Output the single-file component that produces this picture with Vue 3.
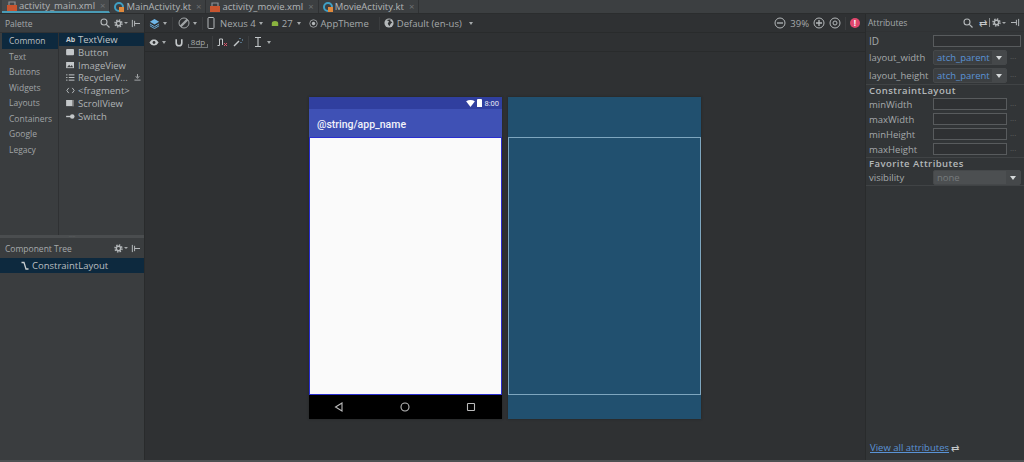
<script setup>
const tabs = [
  { name: "activity_main.xml", type: "xml", active: true },
  { name: "MainActivity.kt", type: "kt" },
  { name: "activity_movie.xml", type: "xml" },
  { name: "MovieActivity.kt", type: "kt" },
];
const categories = ["Common", "Text", "Buttons", "Widgets", "Layouts", "Containers", "Google", "Legacy"];
const widgets = [
  { name: "TextView", icon: "ab" },
  { name: "Button", icon: "button" },
  { name: "ImageView", icon: "image" },
  { name: "RecyclerV...", icon: "list", download: true },
  { name: "<fragment>", icon: "code" },
  { name: "ScrollView", icon: "scroll" },
  { name: "Switch", icon: "switch" },
];
const sizeAttrs = ["minWidth", "maxWidth", "minHeight", "maxHeight"];
</script>

<template>
  <div class="ide">
    <div class="tabs">
      <div v-for="t in tabs" :key="t.name" class="tab" :class="{ active: t.active }">
        <svg v-if="t.type === 'xml'" class="tab-icon" viewBox="0 0 10 10">
          <rect x="0" y="4" width="10" height="6" fill="#c8552f" />
          <path d="M2 4V1h6v3" fill="none" stroke="#8d9296" stroke-width="1.2" />
        </svg>
        <svg v-else class="tab-icon" viewBox="0 0 10 10">
          <circle cx="5" cy="5" r="4" fill="none" stroke="#3f9fc4" stroke-width="2" />
          <rect x="5" y="5" width="5" height="5" fill="#e08a3c" />
        </svg>
        <span>{{ t.name }}</span>
        <span class="close">×</span>
      </div>
    </div>

    <div class="main">
      <aside class="left">
        <div class="palette">
          <div class="panel-head">
            <span>Palette</span>
            <span class="head-icons">
              <svg viewBox="0 0 10 10" class="ico"><circle cx="4" cy="4" r="3" fill="none" stroke="#b4b8ba" stroke-width="1.1" /><path d="M6.3 6.3 9.5 9.5" stroke="#b4b8ba" stroke-width="1.2" /></svg>
              <svg viewBox="0 0 10 10" class="ico gear"><circle cx="5" cy="5" r="2.4" fill="none" stroke="#b4b8ba" stroke-width="1.6" /><circle cx="5" cy="5" r="3.9" fill="none" stroke="#b4b8ba" stroke-width="1.6" stroke-dasharray="1.6 1.46" /></svg>
              <span class="caret small"></span>
              <svg viewBox="0 0 10 10" class="ico pin"><path d="M1.5 1v8M4 5h6M4 2v6" stroke="#b4b8ba" stroke-width="1.1" fill="none" /></svg>
            </span>
          </div>
          <div class="palette-body">
            <ul class="cats">
              <li v-for="(c, i) in categories" :key="c" :class="{ sel: i === 0 }">{{ c }}</li>
            </ul>
            <ul class="widgets">
              <li v-for="(w, i) in widgets" :key="w.name" :class="{ sel: i === 0 }">
                <span class="w-icon">
                  <b v-if="w.icon === 'ab'">Ab</b>
                  <svg v-else-if="w.icon === 'button'" viewBox="0 0 10 8"><rect width="9" height="7" rx="1" fill="#c4c8ca" /></svg>
                  <svg v-else-if="w.icon === 'image'" viewBox="0 0 10 8"><rect width="9" height="7" fill="#c4c8ca" /><path d="M1 6 3.5 3 5 5 6.5 3.5 8 6z" fill="#3c3f41" /></svg>
                  <svg v-else-if="w.icon === 'list'" viewBox="0 0 10 8"><path d="M0 1h1.5M3 1h6.5M0 4h1.5M3 4h6.5M0 7h1.5M3 7h6.5" stroke="#c4c8ca" stroke-width="1.1" /></svg>
                  <svg v-else-if="w.icon === 'code'" viewBox="0 0 10 8"><path d="M3 1 .8 4 3 7M7 1l2.2 3L7 7" stroke="#c4c8ca" stroke-width="1" fill="none" /></svg>
                  <svg v-else-if="w.icon === 'scroll'" viewBox="0 0 10 8"><rect width="9" height="7" fill="#c4c8ca" /><rect x="7" width="2" height="7" fill="#777" /></svg>
                  <svg v-else viewBox="0 0 10 8"><path d="M0 4h5" stroke="#c4c8ca" stroke-width="1.6" /><circle cx="7" cy="4" r="2.6" fill="#c4c8ca" /></svg>
                </span>
                <span>{{ w.name }}</span>
                <svg v-if="w.download" class="dl" viewBox="0 0 8 8"><path d="M4 0v4M2 2.5 4 5l2-2.5M.5 7h7" stroke="#a5a9ab" stroke-width="1.1" fill="none" /></svg>
              </li>
            </ul>
          </div>
        </div>
        <div class="grip">·····</div>
        <div class="tree">
          <div class="panel-head tree-head">
            <span>Component Tree</span>
            <span class="head-icons">
              <svg viewBox="0 0 10 10" class="ico gear"><circle cx="5" cy="5" r="2.4" fill="none" stroke="#b4b8ba" stroke-width="1.6" /><circle cx="5" cy="5" r="3.9" fill="none" stroke="#b4b8ba" stroke-width="1.6" stroke-dasharray="1.6 1.46" /></svg>
              <span class="caret small"></span>
              <svg viewBox="0 0 10 10" class="ico pin"><path d="M1.5 1v8M4 5h6M4 2v6" stroke="#b4b8ba" stroke-width="1.1" fill="none" /></svg>
            </span>
          </div>
          <div class="tree-row">
            <svg viewBox="0 0 10 10" class="ico"><path d="M1.5 1.5h2.5l2 6.5h2.5" stroke="#c9ced0" stroke-width="1.3" fill="none" /></svg>
            <span>ConstraintLayout</span>
          </div>
        </div>
      </aside>

      <section class="center">
        <div class="bar bar-top">
          <svg viewBox="0 0 12 12" class="ico layers"><path d="M6 1 11 4 6 7 1 4z" fill="#6fb7e8" /><path d="M1 6.5 6 9.5l5-3M1 8.5l5 3 5-3" stroke="#6fb7e8" fill="none" /></svg>
          <span class="caret"></span>
          <i class="sep first-sep"></i>
          <svg viewBox="0 0 12 12" class="ico big"><circle cx="6" cy="6" r="5" fill="none" stroke="#a0a4a6" /><path d="M2.5 9.5l7-7" stroke="#a0a4a6" stroke-width="2.4" /></svg>
          <span class="caret"></span>
          <i class="sep second-sep"></i>
          <svg viewBox="0 0 8 12" class="device"><rect x="1" y=".5" width="6" height="11" rx="1" fill="none" stroke="#b4b8ba" /></svg>
          <span class="bar-text">Nexus 4</span>
          <span class="caret"></span>
          <svg viewBox="0 0 10 8" class="droid"><path d="M1 7V3.5C1 2 3 1 5 1s4 1 4 2.5V7z" fill="#8ab33f" /></svg>
          <span class="bar-text">27</span>
          <span class="caret after-api"></span>
          <svg viewBox="0 0 12 12" class="theme"><circle cx="6" cy="6" r="5" fill="none" stroke="#b4b8ba" /><circle cx="6" cy="6" r="2.2" fill="#b4b8ba" /></svg>
          <span class="bar-text">AppTheme</span>
          <i class="sep after-theme"></i>
          <svg viewBox="0 0 12 12" class="theme globe"><circle cx="6" cy="6" r="5.5" fill="#b4b8ba" /><path d="M3 2.5 6 4 4.5 7 6.5 10 8 7 10 5 7.5 3.5 8 1.5z" fill="#2f3133" /></svg>
          <span class="bar-text">Default (en-us)</span>
          <span class="caret after-locale"></span>
          <span class="bar-right">
            <svg viewBox="0 0 12 12" class="ico big"><circle cx="6" cy="6" r="5" fill="none" stroke="#b4b8ba" /><path d="M3 6h6" stroke="#b4b8ba" stroke-width="1.3" /></svg>
            <span class="bar-text">39%</span>
            <svg viewBox="0 0 12 12" class="ico big"><circle cx="6" cy="6" r="5" fill="none" stroke="#b4b8ba" /><path d="M3 6h6M6 3v6" stroke="#b4b8ba" stroke-width="1.3" /></svg>
            <svg viewBox="0 0 12 12" class="ico big"><circle cx="6" cy="6" r="5" fill="none" stroke="#b4b8ba" /><circle cx="6" cy="6" r="2" fill="none" stroke="#b4b8ba" /></svg>
            <i class="sep"></i>
            <span class="err">!</span>
          </span>
        </div>
        <div class="bar bar-second">
          <svg viewBox="0 0 12 8" class="eye"><path d="M.5 4C2.5 1 4 .5 6 .5S9.5 1 11.5 4C9.5 7 8 7.5 6 7.5S2.5 7 .5 4z" fill="#c4c8ca" /><circle cx="6" cy="4" r="1.7" fill="#2f3133" /></svg>
          <span class="caret"></span>
          <svg viewBox="0 0 10 10" class="magnet"><path d="M1.5 1v4.500a3.500 3.500 0 0 0 7 0V1" fill="none" stroke="#c4c8ca" stroke-width="2" /></svg>
          <span class="dp">8dp</span>
          <i class="sep"></i>
          <svg viewBox="0 0 10 10" class="ico"><path d="M.5 8.5h2V2h3v6" fill="none" stroke="#c4c8ca" /><path d="M7 6l3 3M10 6 7 9" stroke="#e0556a" /></svg>
          <svg viewBox="0 0 10 10" class="ico wand"><path d="M1 9 6 4" stroke="#c4c8ca" stroke-width="1.5" /><path d="M7 1v1M9 3h1M8 5v1" stroke="#7eb4dc" /></svg>
          <i class="sep after-wand"></i>
          <svg viewBox="0 0 8 10" class="beam"><path d="M1 .5h6M1 9.5h6M4 .5v9" stroke="#c4c8ca" stroke-width="1.1" /></svg>
          <span class="caret after-beam"></span>
        </div>
        <div class="canvas">
          <div class="phone">
            <div class="status">
              <svg viewBox="0 0 10 8" class="wifi"><path d="M0 1.5C3 -.5 7 -.5 10 1.5L5 8z" fill="#fff" /></svg>
              <span class="battery"></span>
              <span>8:00</span>
            </div>
            <div class="appbar">@string/app_name</div>
            <div class="screen"></div>
            <div class="nav">
              <svg viewBox="0 0 10 10"><path d="M8 1 1.5 5 8 9z" fill="none" stroke="#bbb" stroke-width="1.1" /></svg>
              <svg viewBox="0 0 10 10"><circle cx="5" cy="5" r="4" fill="none" stroke="#bbb" stroke-width="1.1" /></svg>
              <svg viewBox="0 0 10 10"><rect x="1.5" y="1.5" width="7" height="7" rx=".6" fill="none" stroke="#bbb" stroke-width="1.1" /></svg>
            </div>
          </div>
          <div class="blueprint">
            <div class="outline"></div>
          </div>
        </div>
      </section>

      <aside class="right">
        <div class="panel-head attr-head">
          <span>Attributes</span>
          <span class="head-icons">
            <svg viewBox="0 0 10 10" class="ico"><circle cx="4" cy="4" r="3" fill="none" stroke="#b4b8ba" stroke-width="1.1" /><path d="M6.3 6.3 9.5 9.5" stroke="#b4b8ba" stroke-width="1.2" /></svg>
            <span class="swap head-swap">⇄</span>
            <i class="tick"></i>
            <svg viewBox="0 0 10 10" class="ico gear tight"><circle cx="5" cy="5" r="2.4" fill="none" stroke="#b4b8ba" stroke-width="1.6" /><circle cx="5" cy="5" r="3.9" fill="none" stroke="#b4b8ba" stroke-width="1.6" stroke-dasharray="1.6 1.46" /></svg>
            <span class="caret small"></span>
            <svg viewBox="0 0 10 10" class="ico pin"><path d="M8.5 1v8M0 5h6M6 2v6" stroke="#b4b8ba" stroke-width="1.1" fill="none" /></svg>
          </span>
        </div>
        <div class="attr-row id-row">
          <span>ID</span>
          <span class="input wide"></span>
        </div>
        <div class="attr-row combo-row">
          <span>layout_width</span>
          <span class="combo"><em>atch_parent</em><b></b></span>
          <span class="more">···</span>
        </div>
        <div class="attr-row combo-row">
          <span>layout_height</span>
          <span class="combo"><em>atch_parent</em><b></b></span>
          <span class="more">···</span>
        </div>
        <div class="group">ConstraintLayout</div>
        <div v-for="a in sizeAttrs" :key="a" class="attr-row size-row">
          <span>{{ a }}</span>
          <span class="input"></span>
          <span class="more">···</span>
        </div>
        <div class="group">Favorite Attributes</div>
        <div class="attr-row vis-row">
          <span>visibility</span>
          <span class="combo disabled"><em>none</em><b></b></span>
        </div>
        <div class="view-all">
          <a>View all attributes</a>
          <span class="swap">⇄</span>
        </div>
      </aside>
    </div>
    <div class="bottom"></div>
  </div>
</template>

<style>
html, body {
  margin: 0;
  background: #2f3133;
}
</style>

<style scoped>
.ide {
  width: 1024px;
  height: 462px;
  display: flex;
  flex-direction: column;
  overflow: hidden;
  background: #2f3133;
  color: #a9adaf;
  font-family: "Open Sans", "Liberation Sans", sans-serif;
  font-size: 9px;
}
.ide * {
  box-sizing: border-box;
}
ul {
  list-style: none;
  margin: 0;
  padding: 0;
}
svg {
  display: block;
  flex: none;
}

/* tabs */
.tabs {
  height: 14px;
  flex: none;
  display: flex;
  padding-left: 2px;
  background: #3c3f41;
  border-bottom: 1px solid #2b2d2e;
}
.tab {
  display: flex;
  align-items: center;
  gap: 2px;
  padding: 0 4px;
  font-size: 9.5px;
  color: #b2b6b8;
  border-right: 1px solid #2f3133;
}
.tab.active {
  padding-left: 5px;
  background: #46494b;
  border-bottom: 2px solid #4a9bb5;
}
.tab-icon {
  width: 10px;
  height: 10px;
}
.close {
  margin-left: 3px;
  color: #6d7173;
}

.main {
  flex: 1;
  min-height: 0;
  display: flex;
}

/* left side */
.left {
  width: 145px;
  flex: none;
  display: flex;
  flex-direction: column;
  background: #3a3d3f;
  border-right: 1px solid #292b2c;
}
.panel-head {
  height: 19px;
  flex: none;
  display: flex;
  align-items: center;
  justify-content: space-between;
  padding: 0 4px 0 5px;
  font-size: 8.5px;
  color: #a5a9ab;
  border-bottom: 1px solid #303234;
}
.head-icons {
  display: flex;
  align-items: center;
  gap: 2px;
}
.ico {
  width: 10px;
  height: 10px;
}
.ico.big {
  width: 12px;
  height: 12px;
}
.ico.pin {
  width: 9px;
  height: 9px;
  margin-left: 1px;
}
.ico.gear {
  width: 9px;
  height: 9px;
  margin-left: 2px;
}
.ico.gear.tight {
  margin-left: 0;
}
.attr-head .ico.pin {
  margin-left: 3px;
}
.tick {
  width: 1px;
  height: 9px;
  background: #8a8e90;
}
.swap {
  font-size: 10px;
  line-height: 10px;
  color: #c4c8ca;
}
.head-swap {
  margin-left: 4px;
}
.caret {
  width: 0;
  height: 0;
  flex: none;
  border-left: 2.5px solid transparent;
  border-right: 2.5px solid transparent;
  border-top: 3px solid #a5a9ab;
}
.caret.small {
  margin-left: -1px;
  border-top-width: 2px;
  border-left-width: 2px;
  border-right-width: 2px;
}
.palette {
  height: 221px;
  flex: none;
  display: flex;
  flex-direction: column;
}
.palette-body {
  flex: 1;
  display: flex;
}
.cats {
  width: 59px;
  flex: none;
  padding-left: 2px;
  border-right: 1px solid #2f3133;
  font-size: 8.5px;
  color: #a0a4a6;
}
.cats li {
  height: 15.5px;
  line-height: 15.5px;
  padding-left: 7px;
}
.cats li.sel {
  background: #0d293e;
  color: #bbbfc1;
}
.widgets {
  flex: 1;
  min-width: 0;
  font-size: 9.5px;
  color: #afb3b5;
}
.widgets li {
  height: 12.85px;
  display: flex;
  align-items: center;
  gap: 3px;
  padding-left: 7px;
  white-space: nowrap;
}
.widgets li.sel {
  background: #0d293e;
  color: #c0c4c6;
}
.w-icon {
  width: 9px;
  display: flex;
  justify-content: center;
}
.w-icon svg {
  width: 9px;
  height: 7px;
}
.w-icon b {
  font-size: 7px;
  color: #c4c8ca;
}
.dl {
  width: 7px;
  height: 7px;
  margin-left: auto;
  margin-right: 3px;
}
.grip {
  height: 3px;
  flex: none;
  line-height: 2px;
  text-align: center;
  font-size: 5px;
  color: #6d7173;
  background: #4a4d4f;
}
.tree {
  flex: 1;
}
.tree-head {
  height: 20px;
  border-bottom: 0;
}
.tree-row {
  height: 15px;
  display: flex;
  align-items: center;
  gap: 2px;
  padding-left: 20px;
  background: #0d293e;
  font-size: 9.5px;
  color: #bbbfc1;
}

/* center */
.center {
  flex: 1;
  min-width: 0;
  display: flex;
  flex-direction: column;
}
.bar {
  flex: none;
  height: 19px;
  display: flex;
  align-items: center;
  gap: 3px;
  padding-left: 4px;
  border-bottom: 1px solid #292b2c;
}
.bar-top {
  padding-right: 5px;
}
.bar-text {
  font-size: 9.5px;
  color: #a5a9ab;
  white-space: nowrap;
}
.sep {
  width: 1px;
  height: 13px;
  margin: 0 1px;
  background: #3b3d3f;
}
.first-sep {
  margin: 0 2px;
}
.second-sep {
  margin: 0 1px 0 2px;
}
.layers {
  width: 11px;
  height: 11px;
}
.device {
  width: 8px;
  height: 12px;
  margin-right: 2px;
}
.droid {
  width: 8px;
  height: 7px;
  margin-left: 5px;
}
.after-api {
  margin-left: 1px;
}
.theme {
  width: 9px;
  height: 9px;
  margin-left: 5px;
}
.globe {
  width: 10px;
  height: 10px;
  margin-left: 0;
}
.after-theme {
  margin-left: 7px;
}
.after-locale {
  margin-left: 4px;
}
.bar-right {
  margin-left: auto;
  display: flex;
  align-items: center;
  gap: 4px;
}
.bar-right .sep {
  margin: 0;
}
.err {
  width: 10px;
  height: 10px;
  border-radius: 50%;
  background: #e0476d;
  color: #fff;
  font-size: 8px;
  font-weight: 700;
  line-height: 10px;
  text-align: center;
}
.eye {
  width: 10px;
  height: 7px;
}
.magnet {
  width: 8px;
  height: 9px;
  margin-left: 6px;
}
.dp {
  position: relative;
  width: 20px;
  margin-left: 2px;
  font-size: 8px;
  line-height: 10px;
  text-align: center;
  border-bottom: 1px solid #73777a;
  color: #a5a9ab;
}
.dp::before,
.dp::after {
  content: "";
  position: absolute;
  bottom: 0;
  width: 1px;
  height: 3px;
  background: #73777a;
}
.dp::before {
  left: 0;
}
.dp::after {
  right: 0;
}
.wand {
  margin-left: 3px;
}
.after-wand {
  margin: 0 2px;
}
.beam {
  width: 8px;
  height: 10px;
}
.after-beam {
  margin-left: 2px;
}
.canvas {
  flex: 1;
  display: flex;
  align-items: flex-start;
  gap: 6px;
  padding: 45px 0 0 164px;
}
.phone {
  width: 193px;
  height: 322px;
  display: flex;
  flex-direction: column;
  box-shadow: 0 0 2px #232425;
}
.status {
  height: 12px;
  flex: none;
  display: flex;
  align-items: center;
  justify-content: flex-end;
  gap: 2px;
  padding-right: 3px;
  background: #303f9f;
  color: #e4e6f3;
  font-family: Roboto, sans-serif;
  font-size: 7.5px;
}
.wifi {
  width: 9px;
  height: 7px;
}
.battery {
  width: 5px;
  height: 8px;
  margin-right: 1px;
  background: #fff;
  border-radius: 1px 1px 0 0;
}
.appbar {
  height: 28px;
  flex: none;
  display: flex;
  align-items: center;
  padding: 2px 0 0 8px;
  background: #3f51b5;
  color: #f2f3fa;
  font-family: Roboto, sans-serif;
  font-size: 10.5px;
  font-weight: 500;
}
.screen {
  flex: 1;
  background: #fafafa;
  border: 1px solid #2a2ed0;
}
.nav {
  height: 24px;
  flex: none;
  display: flex;
  align-items: center;
  justify-content: space-between;
  padding: 0 26px 0 25px;
  background: #000;
}
.nav svg {
  width: 10px;
  height: 10px;
}
.blueprint {
  width: 193px;
  height: 322px;
  padding-top: 40px;
  background: #21506f;
  box-shadow: 0 0 2px #232425;
}
.outline {
  height: 258px;
  border: 1px solid #7ea6bf;
}

/* right side */
.right {
  width: 159px;
  flex: none;
  display: flex;
  flex-direction: column;
  border-left: 1px solid #292b2c;
  padding-bottom: 4px;
  background: #323537;
}
.attr-head {
  height: 18px;
  padding-left: 2px;
}
.attr-row {
  display: flex;
  align-items: center;
  padding-left: 3px;
  font-size: 9.5px;
  color: #a5a9ab;
}
.attr-row > span:first-child {
  width: 64px;
  flex: none;
  white-space: nowrap;
}
.id-row {
  height: 17px;
  font-size: 10px;
}
.combo-row {
  height: 17.5px;
}
.size-row {
  height: 15.15px;
}
.input {
  width: 74px;
  height: 12px;
  border: 1px solid #585b5d;
  background: #2f3133;
}
.input.wide {
  width: 88px;
}
.combo {
  width: 74px;
  height: 15px;
  display: flex;
  align-items: center;
  justify-content: space-between;
  border: 1px solid #45484a;
  border-radius: 2px;
  background: #3c3f41;
  overflow: hidden;
}
.combo em {
  font-style: normal;
  padding-left: 3px;
  color: #5a93d6;
}
.combo b {
  width: 14px;
  height: 100%;
  flex: none;
  position: relative;
  background: #45484a;
}
.combo b::after {
  content: "";
  position: absolute;
  left: 4px;
  top: 5px;
  border-left: 3px solid transparent;
  border-right: 3px solid transparent;
  border-top: 4px solid #d6d9da;
}
.combo.disabled {
  width: 88px;
  background: #4c4f51;
}
.combo.disabled em {
  color: #777b7d;
}
.more {
  margin-left: 3px;
  color: #666a6c;
  font-size: 8px;
}
.group {
  height: 12.5px;
  padding-left: 3px;
  border-top: 1px solid #404345;
  line-height: 11px;
  font-size: 9.5px;
  font-weight: 600;
  letter-spacing: 0.45px;
  color: #b4b8ba;
}
.vis-row {
  height: 16px;
  border-bottom: 1px solid #404345;
}
.view-all {
  margin-top: auto;
  display: flex;
  align-items: center;
  gap: 2px;
  padding: 0 0 2px 4px;
  font-size: 9.5px;
}
.view-all a {
  color: #5a93d6;
  text-decoration: underline;
}
.bottom {
  height: 2px;
  flex: none;
  background: #4c5052;
}
</style>
